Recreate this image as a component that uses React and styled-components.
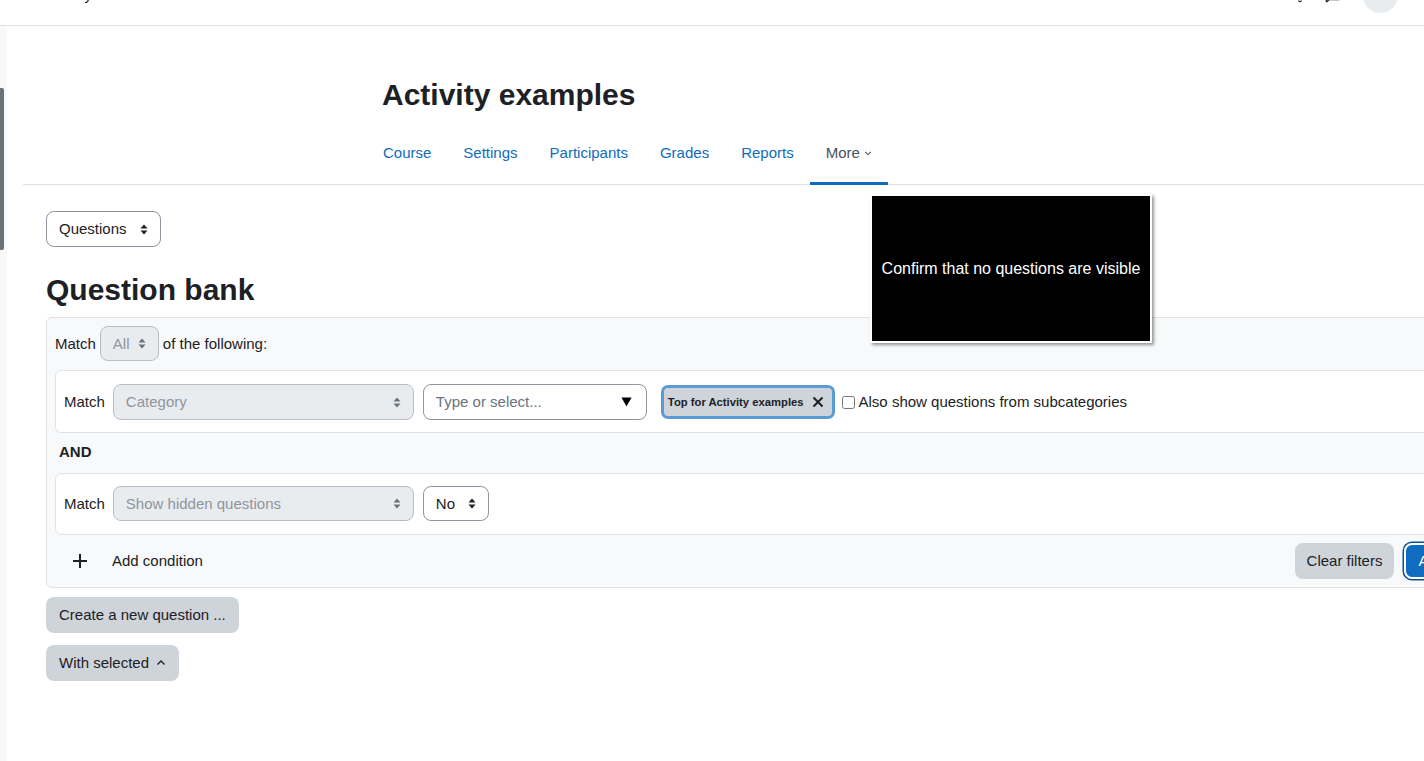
import React from "react";
import styled, { createGlobalStyle } from "styled-components";
import { Bell, MessageSquare } from "lucide-react";

const GlobalStyle = createGlobalStyle`
  html, body {
    margin: 0;
    padding: 0;
    overflow: hidden;
    background: #fff;
  }
  body {
    font-family: "Liberation Sans", Arial, sans-serif;
    font-size: 15px;
    line-height: 22px;
    color: #1d2125;
  }
  * {
    box-sizing: border-box;
  }
`;

const Navbar = styled.header`
  height: 26px;
  border-bottom: 1px solid #dee2e6;
  overflow: hidden;
`;

const NavbarInner = styled.div`
  height: 60px;
  margin-top: -35px;
  display: flex;
  align-items: center;
  padding: 0 26px 0 72px;
`;

const NavbarLink = styled.span`
  font-size: 15px;
  color: #1d2125;
`;

const NavbarTools = styled.div`
  margin-left: auto;
  display: flex;
  align-items: center;
  gap: 17px;
  color: #1d2125;
`;

const Avatar = styled.div`
  width: 35px;
  height: 35px;
  border-radius: 50%;
  background: #e9ecef;
  margin-left: 5px;
`;

const Page = styled.div`
  position: relative;
  display: flex;
  width: 1519px;
  min-height: 735px;
`;

const Drawer = styled.div`
  width: 7px;
  flex-shrink: 0;
  background: #f8f9fa;
  padding-top: 62px;
`;

const Thumb = styled.div`
  width: 4px;
  height: 162px;
  background: #6a737b;
  border-radius: 0 2px 2px 0;
`;

const Main = styled.main`
  flex: 1;
  padding-left: 16px;
`;

const Header = styled.div`
  padding: 51px 0 0 359px;
`;

const Title = styled.h1`
  margin: 0;
  font-size: 30px;
  line-height: 36px;
  font-weight: bold;
`;

const SecondaryNav = styled.nav`
  display: flex;
  margin-top: 19px;
  padding-left: 344px;
  border-bottom: 1px solid #dee2e6;
`;

const TabLink = styled.a`
  display: flex;
  align-items: center;
  gap: 4px;
  padding: 10px 16px 18px;
  margin-bottom: -1px;
  line-height: 22px;
  font-size: 15px;
  color: ${(p) => (p.$active ? "#495057" : "#0f6cbf")};
  border-bottom: 3px solid ${(p) => (p.$active ? "#0f6cbf" : "transparent")};
  text-decoration: none;
`;

const Content = styled.div`
  padding: 26px 0 40px 23px;
`;

const SelectBox = styled.div`
  display: inline-flex;
  align-items: center;
  justify-content: space-between;
  flex-shrink: 0;
  width: ${(p) => p.$w}px;
  height: ${(p) => p.$h || 36}px;
  padding: 0 12px;
  border: 1px solid ${(p) => (p.$disabled ? "#b9bec4" : "#8f959e")};
  border-radius: 8px;
  background: ${(p) => (p.$disabled ? "#e9ecef" : "#fff")};
  color: ${(p) => (p.$disabled ? "#8f959e" : "#1d2125")};
  font-size: 15px;
`;

const Heading = styled.h2`
  margin: 25px 0 9px;
  font-size: 30px;
  line-height: 36px;
  font-weight: bold;
`;

const FilterBox = styled.div`
  border: 1px solid #dee2e6;
  border-radius: 6px;
  background: #f8f9fa;
  padding: 8px;
`;

const Row = styled.div`
  display: flex;
  align-items: center;
`;

const Gap = styled.span`
  margin: 0 4px;
`;

const Card = styled.div`
  display: flex;
  align-items: center;
  margin-top: ${(p) => p.$mt || 0}px;
  padding: ${(p) => (p.$tall ? "13px 8px 12px" : "12px 8px 13px")};
  background: #fff;
  border: 1px solid #dee2e6;
  border-radius: 6px;
  gap: 9px;
`;

const MatchLabel = styled.span`
  margin-right: -1px;
`;

const Joiner = styled.div`
  margin: 8px 0 10px 4px;
  font-weight: bold;
`;

const TextInput = styled.div`
  display: flex;
  align-items: center;
  justify-content: space-between;
  width: 224px;
  height: 36px;
  padding: 0 14px 0 12px;
  border: 1px solid #8f959e;
  border-radius: 8px;
  background: #fff;
  color: #6a737b;
  flex-shrink: 0;
`;

const Tag = styled.span`
  display: inline-flex;
  align-items: center;
  gap: 8px;
  height: 34px;
  margin-left: 5px;
  padding: 0 8px 0 4px;
  background: #ced4da;
  border: 3px solid #5b9bd5;
  border-radius: 7px;
  font-size: 11.25px;
  font-weight: bold;
  flex-shrink: 0;
`;

const CheckLabel = styled.label`
  display: flex;
  align-items: center;
  gap: 4px;
  margin-left: -2px;
  white-space: nowrap;
`;

const Check = styled.input`
  width: 13px;
  height: 13px;
  margin: 0;
`;

const AddRow = styled.div`
  display: flex;
  align-items: center;
  margin-top: 8px;
  height: 36px;
`;

const LinkButton = styled.button`
  display: flex;
  align-items: center;
  gap: 25px;
  padding: 0 0 0 18px;
  background: none;
  border: none;
  font: inherit;
  color: #1d2125;
`;

const Button = styled.button`
  display: inline-flex;
  align-items: center;
  gap: 7px;
  height: 36px;
  padding: 0 ${(p) => (p.$compact ? 12 : 13)}px;
  border: none;
  border-radius: 8px;
  background: #ced4da;
  color: #1d2125;
  font: inherit;
  font-size: 15px;
  white-space: nowrap;
`;

const PrimaryButton = styled(Button)`
  margin-left: 10px;
  background: #0f6cbf;
  color: #fff;
  border: 2px solid #fff;
  box-shadow: 0 0 0 1.5px #0f4f8c;
`;

const Actions = styled.div`
  margin-left: auto;
  display: flex;
  align-items: center;
`;

const Stack = styled.div`
  display: flex;
  flex-direction: column;
  align-items: flex-start;
  gap: 12px;
  margin-top: 9px;
`;

const Tooltip = styled.div`
  position: absolute;
  left: 870px;
  top: 168px;
  width: 282px;
  height: 149px;
  display: flex;
  align-items: center;
  justify-content: center;
  background: #000;
  color: #fff;
  font-size: 16px;
  border: 2px solid #fff;
  box-shadow: 2px 2px 3px rgba(0, 0, 0, 0.4);
`;

function Arrows({ color = "#1d2125" }) {
  return (
    <svg width="8" height="11" viewBox="0 0 8 11">
      <path d="M4 0.5 L7.5 4.5 L0.5 4.5 Z M4 10.5 L7.5 6.5 L0.5 6.5 Z" fill={color} />
    </svg>
  );
}

function Chevron({ up, size = 10 }) {
  return (
    <svg width={size} height={size} viewBox="0 0 10 10">
      <path
        d={up ? "M1.5 6.5 L5 3 L8.5 6.5" : "M1.5 3.5 L5 7 L8.5 3.5"}
        fill="none"
        stroke="currentColor"
        strokeWidth="1.3"
      />
    </svg>
  );
}

function Select({ children, disabled, w, h }) {
  return (
    <SelectBox $w={w} $h={h} $disabled={disabled}>
      <span>{children}</span>
      <Arrows color={disabled ? "#6a737b" : "#1d2125"} />
    </SelectBox>
  );
}

export default function App() {
  const tabs = ["Course", "Settings", "Participants", "Grades", "Reports"];
  return (
    <>
      <GlobalStyle />
      <Navbar>
        <NavbarInner>
          <NavbarLink>My courses</NavbarLink>
          <NavbarTools>
            <Bell size={16} strokeWidth={2} />
            <MessageSquare size={16} strokeWidth={2} />
            <Avatar />
          </NavbarTools>
        </NavbarInner>
      </Navbar>
      <Page>
        <Drawer>
          <Thumb />
        </Drawer>
        <Main>
          <Header>
            <Title>Activity examples</Title>
          </Header>
          <SecondaryNav>
            {tabs.map((t) => (
              <TabLink key={t} href="#">
                {t}
              </TabLink>
            ))}
            <TabLink $active href="#">
              More <Chevron size={8} />
            </TabLink>
          </SecondaryNav>
          <Content>
            <Select w={115}>Questions</Select>
            <Heading>Question bank</Heading>
            <FilterBox>
              <Row>
                <span>Match</span>
                <Gap>
                  <Select w={59} h={35} disabled>
                    All
                  </Select>
                </Gap>
                <span>of the following:</span>
              </Row>
              <Card $mt={9} $tall>
                <MatchLabel>Match</MatchLabel>
                <Select w={301} disabled>
                  Category
                </Select>
                <TextInput>
                  <span>Type or select...</span>
                  <svg width="11" height="10" viewBox="0 0 11 10">
                    <path d="M0.5 0.5 L10.5 0.5 L5.5 9.5 Z" fill="#000" />
                  </svg>
                </TextInput>
                <Tag>
                  Top for Activity examples
                  <svg width="12" height="12" viewBox="0 0 12 12">
                    <path d="M1.5 1.5 L10.5 10.5 M10.5 1.5 L1.5 10.5" stroke="#1d2125" strokeWidth="2" />
                  </svg>
                </Tag>
                <CheckLabel>
                  <Check type="checkbox" />
                  Also show questions from subcategories
                </CheckLabel>
              </Card>
              <Joiner>AND</Joiner>
              <Card>
                <MatchLabel>Match</MatchLabel>
                <Select w={301} h={35} disabled>
                  Show hidden questions
                </Select>
                <Select w={66} h={35}>
                  No
                </Select>
              </Card>
              <AddRow>
                <LinkButton>
                  <svg width="14" height="14" viewBox="0 0 14 14">
                    <path d="M7 0 V14 M0 7 H14" stroke="#1d2125" strokeWidth="2" />
                  </svg>
                  Add condition
                </LinkButton>
                <Actions>
                  <Button $compact>Clear filters</Button>
                  <PrimaryButton $compact>Apply filters</PrimaryButton>
                </Actions>
              </AddRow>
            </FilterBox>
            <Stack>
              <Button>Create a new question ...</Button>
              <Button>
                With selected <Chevron up />
              </Button>
            </Stack>
          </Content>
        </Main>
        <Tooltip>Confirm that no questions are visible</Tooltip>
      </Page>
    </>
  );
}
